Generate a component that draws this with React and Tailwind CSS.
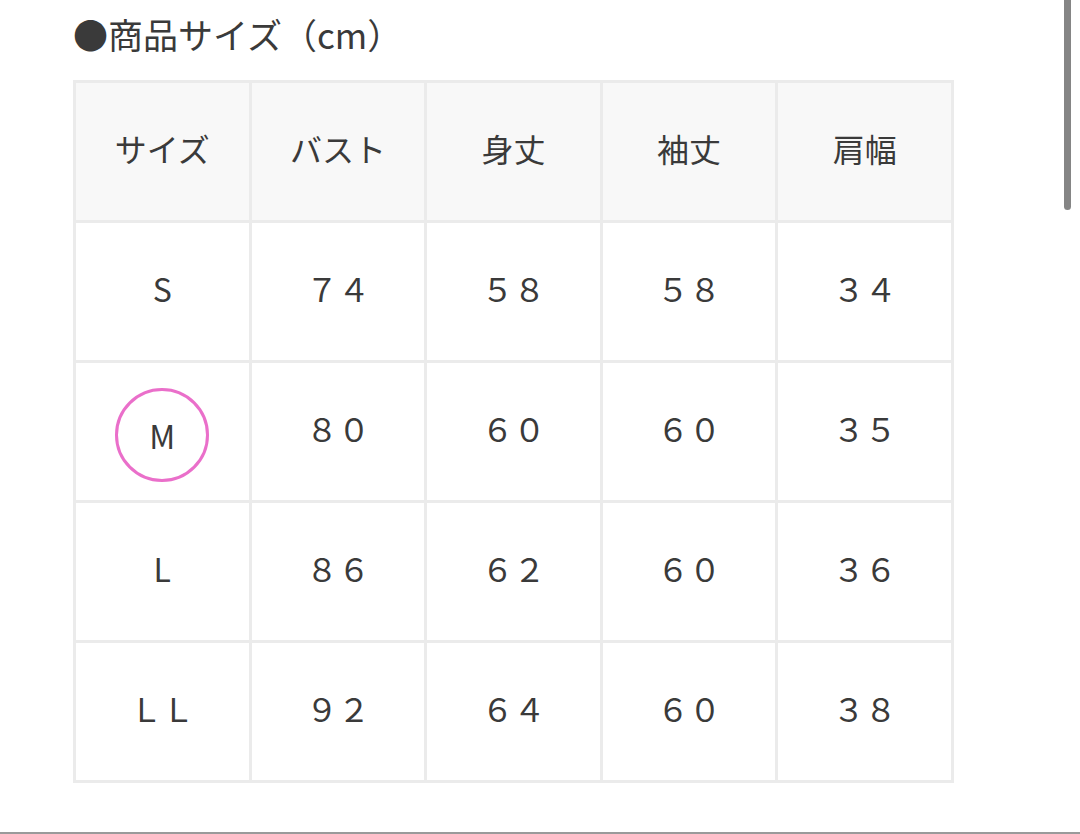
import React from "react";

// 商品サイズ表
const HEADERS = ["サイズ", "バスト", "身丈", "袖丈", "肩幅"];

const ROWS = [
  { size: "S", values: ["７４", "５８", "５８", "３４"] },
  { size: "M", values: ["８０", "６０", "６０", "３５"], marked: true },
  { size: "L", values: ["８６", "６２", "６０", "３６"] },
  { size: "ＬＬ", values: ["９２", "６４", "６０", "３８"] },
];

function Cell({ children, head }) {
  return (
    <div
      className={`h-[137px] pb-[8px] flex items-center justify-center text-[32px] leading-none text-[#3a3a3a] ${
        head ? "bg-[#f8f8f8]" : "bg-white"
      }`}
    >
      {children}
    </div>
  );
}

export default function App() {
  return (
    <div
      className="relative h-[834px] w-[1080px] bg-white flex flex-col overflow-hidden"
      style={{ fontFamily: '"Noto Sans CJK JP", "Noto Sans", sans-serif' }}
    >
      {/* スクロールバー */}
      <div className="absolute right-[9px] top-0 w-[7px] h-[210px] rounded-b-full bg-[#858585]" />

      <div className="pl-[73px] pt-[16px]">
        <h2 className="h-[38px] text-[35px] leading-none text-[#3a3a3a] font-normal">
          ●商品サイズ（cm）
        </h2>

        {/* サイズ表 */}
        <div className="mt-[26px] w-[881px] grid grid-cols-5 gap-[3px] p-[3px] bg-[#ebebeb]">
          {HEADERS.map((h) => (
            <Cell key={h} head>
              {h}
            </Cell>
          ))}
          {ROWS.map((row) => (
            <React.Fragment key={row.size}>
              <Cell>
                {row.marked ? (
                  <span className="w-[94px] h-[94px] mt-[14px] rounded-full border-[3px] border-[#ea6fca] flex items-center justify-center">
                    {row.size}
                  </span>
                ) : (
                  row.size
                )}
              </Cell>
              {row.values.map((v, i) => (
                <Cell key={i}>{v}</Cell>
              ))}
            </React.Fragment>
          ))}
        </div>
      </div>

      <div className="mt-auto h-[2px] bg-[#9a9a9a]" />
    </div>
  );
}
